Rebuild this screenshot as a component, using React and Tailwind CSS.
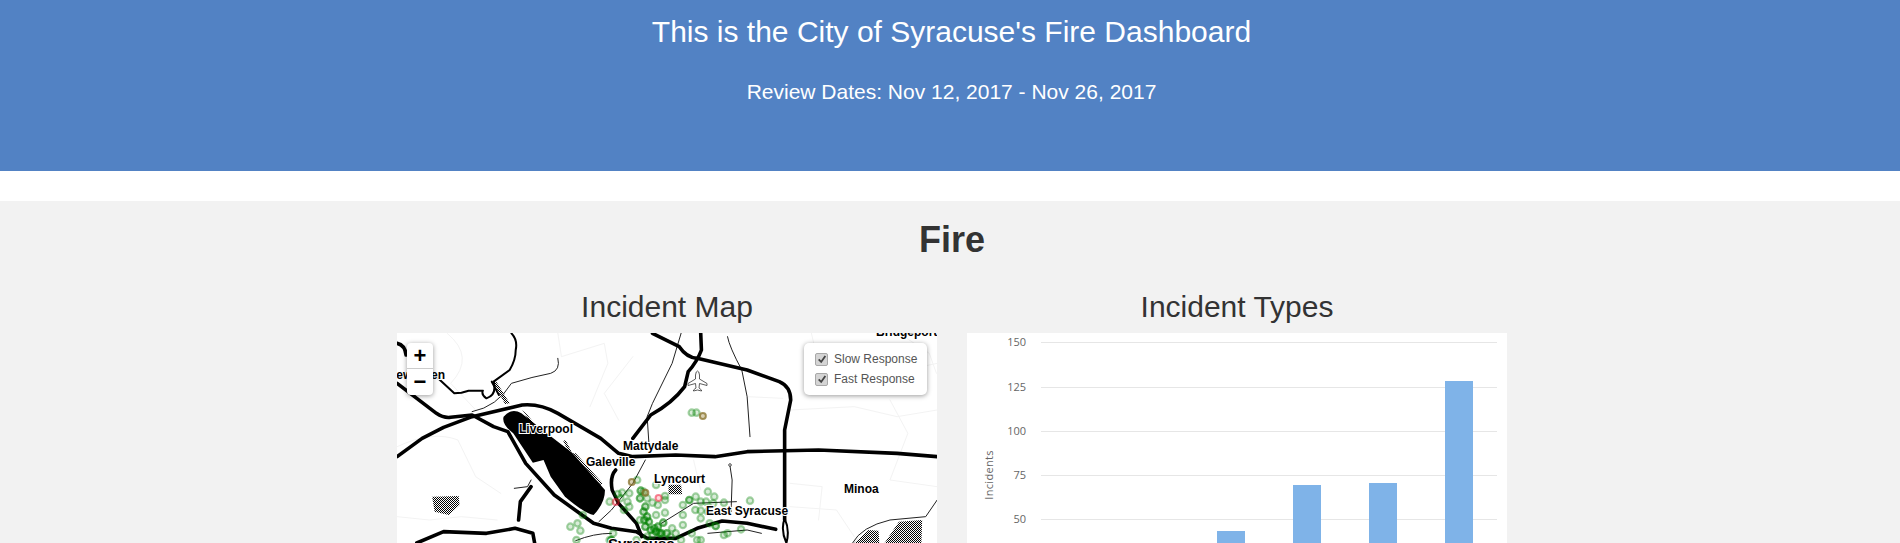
const SANS = 'font-["Liberation_Sans",Arial,sans-serif]';

// map geometry is traced from a 2.8x / 3x crop, hence the scale on the group below
const thickRoads = [
  'M735,40 L810,80 Q830,112 860,115 L1000,150 L1090,185 Q1122,200 1122,240 L1105,330 L1105,600',
  'M870,40 L872,90 Q860,125 835,155 L825,200 Q790,250 730,285 L680,355',
  'M20,410 L90,355 L150,322 L230,290 L370,255 Q420,250 470,280 L590,355 L640,400 L680,410 L800,405 L910,410 L1000,395 L1200,390 L1420,400 L1532,410',
  'M20,190 L130,280 Q150,295 170,292 L230,285 L290,320 L330,335 L380,430 L460,525 L570,610 L620,625 L690,635 L720,655 L800,655 L860,625 L930,603 L1000,610 L1080,628',
  'M632,450 Q615,470 622,510 L640,550 L690,610 L705,650',
  'M360,600 L365,545 L395,500',
  'M75,669 L150,635 L270,640 L350,625 L400,640 L405,669',
  'M20,70 Q42,75 45,105',
];

const mediumRoads = [
  'M340,40 Q358,60 352,90 Q352,120 335,150 L290,185 Q300,225 270,235 Q255,225 260,212 L220,212 L200,218 L180,220 L130,170',
  'M285,185 L305,225',
  'M1105,595 Q1093,630 1110,669 Q1120,630 1105,595',
];

const thinRoads = [
  'M945,50 Q950,80 985,150 L1000,230 L1008,350',
  'M815,40 L790,130 L735,250 L720,290 L725,370',
  'M230,275 Q300,260 340,190 Q400,170 450,160 Q478,150 470,115',
  'M715,420 L680,490 L620,570 L585,605',
  'M952,438 L958,480 L955,575',
  'M970,545 L850,550 L760,610',
  'M1532,540 L1500,590 L1400,600 Q1320,620 1295,669',
  'M520,662 Q570,640 620,640',
  'M890,640 L1000,630 L1040,640',
  'M348,505 L385,500 L395,480',
];

const faintRoads = [
  'M160,40 Q240,110 170,190 L240,270',
  'M470,40 L480,110 L600,70 L610,130 L560,260',
  'M680,110 L600,220 L640,300',
  'M20,380 Q120,330 190,360 L240,470 L310,520',
  'M1180,40 L1210,180 L1400,160 L1532,130',
  'M1120,270 L1300,260 L1420,290 L1532,270',
  'M1120,490 L1210,500 L1200,600',
  'M1400,240 L1450,340 L1400,480 L1532,500',
  'M850,420 L870,510',
  'M1000,230 L1100,235',
  'M1120,560 L1250,570 L1300,650',
  'M20,590 L110,600 L200,590 L300,600',
  'M1440,50 L1510,100 L1530,160',
];

const stipples = [
  'M118,530 L192,528 L195,555 L165,585 L125,575 Z',
  'M780,494 L815,494 L818,523 L780,523 Z',
  'M1300,669 L1340,630 L1368,632 L1370,669 Z',
  'M1385,669 L1425,605 L1490,600 L1488,669 Z',
  'M288,185 L298,185 L335,250 L322,252 Z',
  'M370,270 L385,285 L405,312 L392,305 Z',
  'M484,360 L493,362 L508,395 L497,390 Z',
  'M512,400 L520,400 L595,490 L590,495 Z',
];

const greenDots = [
  [845,278],[858,278],[692,480],[745,495],[890,515],[908,530],[702,512],[702,512],[710,515],[650,518],[670,520],[638,522],
  [615,545],[645,535],[665,545],[655,570],[670,560],[700,535],[700,535],[720,535],[735,548],[770,528],[770,540],[750,555],
  [715,560],[715,560],[710,575],[710,575],[720,590],[720,590],[745,585],[770,578],[725,605],[725,605],[765,608],[765,608],
  [820,555],[838,540],[838,540],[856,530],[870,545],[885,545],[905,550],[935,548],[1008,542],[855,570],[870,572],[890,575],
  [870,595],[820,585],[820,615],[895,610],[912,618],[912,618],[845,640],[790,625],[800,640],[785,650],[760,640],[760,640],
  [740,625],[740,625],[745,635],[745,635],[730,630],[730,630],[750,620],[750,620],[735,645],[755,640],[755,640],[720,650],
  [775,640],[775,640],[525,610],[505,620],[533,632],[522,660],[540,585],[625,640],[620,660],[620,660],[690,660],[860,660],
  [870,660],[815,660],[935,645],[945,640],[983,628],[615,660],[700,600],[712,600],[712,600],[715,620],[715,620],
];

const tanDots = [[876,288],[677,486],[715,518]];
const redDots = [[632,546],[752,534]];

const labels = [
  { text: 'Bridgeport', x: 479, y: 3 },
  { text: 'Hagewarden', x: 48, y: 46, end: true },
  { text: 'Liverpool', x: 122, y: 100 },
  { text: 'Mattydale', x: 226, y: 117 },
  { text: 'Galeville', x: 189, y: 133 },
  { text: 'Lyncourt', x: 257, y: 150 },
  { text: 'Minoa', x: 447, y: 160 },
  { text: 'East Syracuse', x: 309, y: 182 },
  { text: 'Syracuse', x: 211, y: 216, size: 15 },
];

const toX = (x) => x / 2.8 - 7;
const toY = (y) => y / 3 - 13;

function MapDrawing() {
  return (
    <svg viewBox="0 0 540 210" className="block w-full h-full">
      <defs>
        {/* sized in crop units so that it lands on a 2px checker once scaled */}
        <pattern id="stipple" width="5.6" height="6" patternUnits="userSpaceOnUse">
          <rect width="2.8" height="3" fill="#000" />
          <rect x="2.8" y="3" width="2.8" height="3" fill="#000" />
        </pattern>
      </defs>
      <g transform="translate(-7 -13) scale(0.35714 0.33333)" fill="none" strokeLinejoin="round" strokeLinecap="round">
        {faintRoads.map((d) => (
          <path key={d} d={d} stroke="#f3f3f3" strokeWidth="1" vectorEffect="non-scaling-stroke" />
        ))}
        {stipples.map((d) => (
          <path key={d} d={d} fill="url(#stipple)" />
        ))}
        {thinRoads.map((d) => (
          <path key={d} d={d} stroke="#222" strokeWidth="1" vectorEffect="non-scaling-stroke" />
        ))}
        {mediumRoads.map((d) => (
          <path key={d} d={d} stroke="#000" strokeWidth="2" vectorEffect="non-scaling-stroke" />
        ))}
        {thickRoads.map((d) => (
          <path key={d} d={d} stroke="#000" strokeWidth="3.6" vectorEffect="non-scaling-stroke" />
        ))}
        {/* Onondaga Lake */}
        <path
          d="M318,290 Q340,262 368,280 L430,332 L510,398 L602,510 Q602,550 570,585 Q545,580 490,530 L450,470 L430,420 L400,428 L345,340 Q312,312 318,290 Z"
          fill="#000"
        />
      </g>

      {/* airport */}
      <path
        d="M300.5,38 Q302,38 302.5,42 L302.5,46 L310,50.5 L310,52.5 L302.5,50.5 L302,55 L304.5,57 L304.5,58 L300.5,57 L296.5,58 L296.5,57 L299,55 L298.5,50.5 L291,52.5 L291,50.5 L298.5,46 L298.5,42 Q299,38 300.5,38 Z"
        fill="#fff"
        stroke="#333"
        strokeWidth="0.8"
      />
      <circle cx={toX(952)} cy={toY(435)} r="1.3" fill="#fff" stroke="#222" strokeWidth="0.8" />

      {greenDots.map(([x, y], i) => (
        <circle key={i} cx={toX(x)} cy={toY(y)} r="3.2" fill="#008000" fillOpacity="0.15" stroke="#008000" strokeOpacity="0.35" strokeWidth="2.2" />
      ))}
      {tanDots.map(([x, y]) => (
        <circle key={x} cx={toX(x)} cy={toY(y)} r="3" fill="#a08a40" fillOpacity="0.4" stroke="#806a20" strokeOpacity="0.7" strokeWidth="2" />
      ))}
      {redDots.map(([x, y]) => (
        <circle key={x} cx={toX(x)} cy={toY(y)} r="3" fill="#ff0000" fillOpacity="0.15" stroke="#f01030" strokeOpacity="0.5" strokeWidth="2" />
      ))}

      {labels.map((l) => (
        <text
          key={l.text}
          x={l.x}
          y={l.y}
          textAnchor={l.end ? 'end' : 'start'}
          fontSize={l.size || 12}
          fontWeight="700"
          fill="#000"
          stroke="#fff"
          strokeWidth="2"
          paintOrder="stroke"
          fontFamily='"Liberation Sans", Arial, sans-serif'
        >
          {l.text}
        </text>
      ))}
    </svg>
  );
}

function LayerToggle({ label }) {
  return (
    <div className="flex items-center h-[20px]">
      <span className="flex items-center justify-center w-[13px] h-[13px] rounded-[2px] bg-[#d4d4d4] border border-[#a8a8a8]">
        <svg viewBox="0 0 12 12" className="w-[10px] h-[10px]">
          <path d="M2 6.5 L5 9.5 L10 2.5" fill="none" stroke="#444" strokeWidth="2.2" />
        </svg>
      </span>
      <span className="ml-[6px] text-[12px] text-[#555]">{label}</span>
    </div>
  );
}

function IncidentMap() {
  return (
    <div className="relative h-[210px] bg-white overflow-hidden">
      <MapDrawing />
      <div className="absolute top-[10px] left-[10px] w-[26px] rounded-[4px] bg-white shadow-[0_1px_5px_rgba(0,0,0,0.4)]">
        <div className="h-[26px] flex items-center justify-center border-b border-[#ccc] text-[22px] font-bold leading-none text-black">+</div>
        <div className="h-[26px] flex items-center justify-center text-[22px] font-bold leading-none text-black">−</div>
      </div>
      <div className="absolute top-[10px] right-[10px] w-[123px] h-[52px] rounded-[5px] bg-white pl-[11px] pt-[6px] shadow-[0_1px_5px_rgba(0,0,0,0.4)]">
        <LayerToggle label="Slow Response" />
        <LayerToggle label="Fast Response" />
      </div>
    </div>
  );
}

const ticks = [
  { label: '150', y: 9 },
  { label: '125', y: 54 },
  { label: '100', y: 98 },
  { label: '75', y: 142 },
  { label: '50', y: 186 },
];

const bars = [
  { x: 250, top: 198 },
  { x: 326, top: 152 },
  { x: 402, top: 150 },
  { x: 478, top: 48 },
];

function IncidentChart() {
  return (
    <div className="h-[210px] bg-white overflow-hidden">
      <svg viewBox="0 0 540 210" className="block w-full h-full" fontFamily='"Open Sans", sans-serif'>
        {ticks.map((t) => (
          <g key={t.label}>
            <line x1="74" x2="530" y1={t.y + 0.5} y2={t.y + 0.5} stroke="#e6e6e6" />
            <text x="59" y={t.y + 4} textAnchor="end" fontSize="11" fill="#666">{t.label}</text>
          </g>
        ))}
        {bars.map((b) => (
          <rect key={b.x} x={b.x} y={b.top} width="28" height={210 - b.top} fill="#7fb3e8" />
        ))}
        <text transform="translate(26 142) rotate(-90)" textAnchor="middle" fontSize="11" letterSpacing="0.3" fill="#666">Incidents</text>
      </svg>
    </div>
  );
}

export default function App() {
  return (
    <div className={`${SANS} h-screen overflow-hidden flex flex-col bg-white`}>
      <header className="h-[171px] shrink-0 bg-[#5282c4] pl-[3px] pt-[15px] text-center text-white">
        <h2 className="text-[30px] leading-[33px]">This is the City of Syracuse's Fire Dashboard</h2>
        <h4 className="mt-[33px] text-[21px] leading-[22px]">Review Dates: Nov 12, 2017 - Nov 26, 2017</h4>
      </header>

      <main className="mt-[30px] flex-1 bg-[#f2f2f2] pl-[4px] pt-[19px] text-[#333]">
        <h1 className="text-center text-[36px] font-bold leading-[40px]">Fire</h1>
        <div className="mt-[30px] mx-auto w-[1110px] grid grid-cols-2 gap-[30px]">
          <section>
            <h2 className="mb-[10px] text-center text-[30px] leading-[33px]">Incident Map</h2>
            <IncidentMap />
          </section>
          <section>
            <h2 className="mb-[10px] text-center text-[30px] leading-[33px]">Incident Types</h2>
            <IncidentChart />
          </section>
        </div>
      </main>
    </div>
  );
}
